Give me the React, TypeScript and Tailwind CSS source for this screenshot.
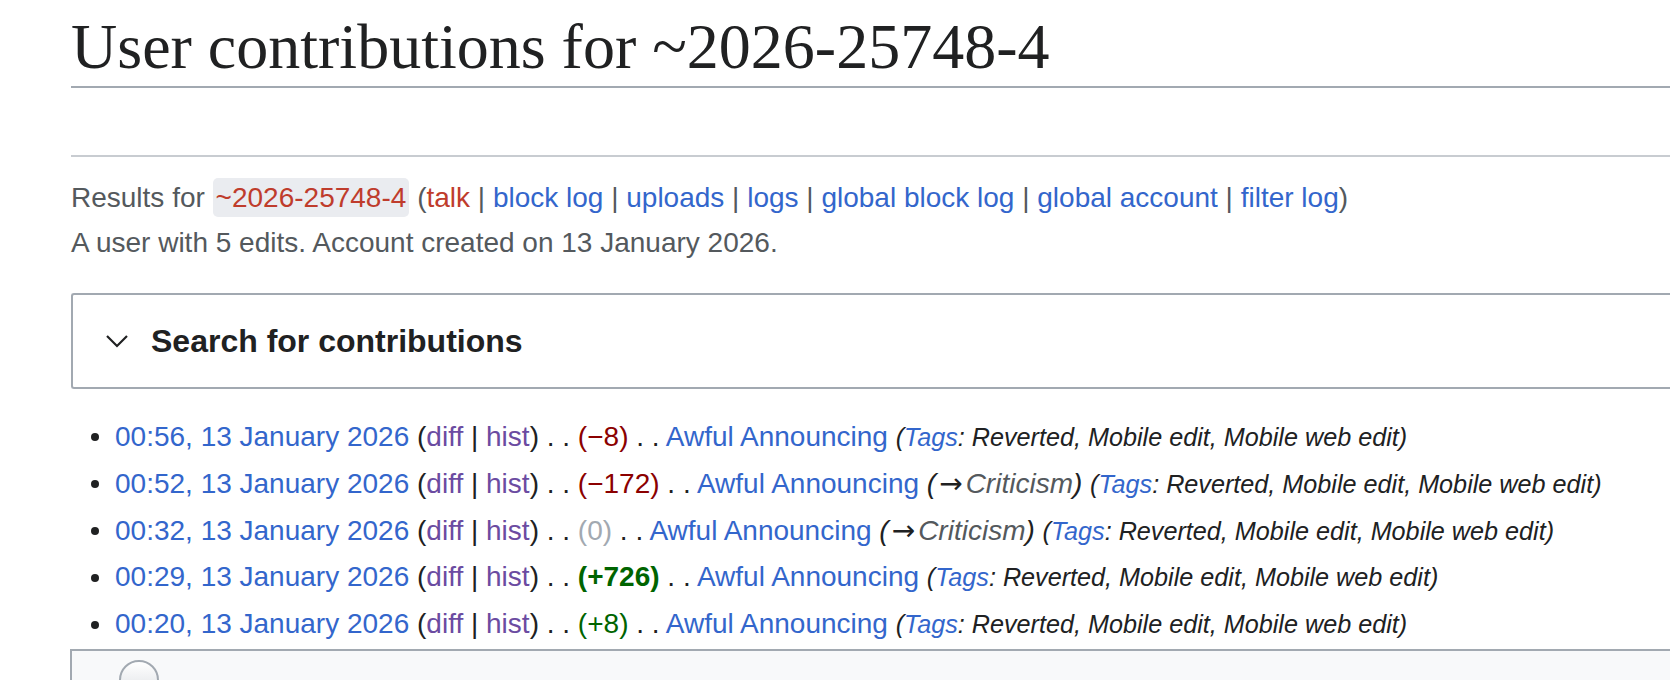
import React from 'react';

type Row = {
  time: string;
  diff: number;
  section: string | null;
};

const rows: Row[] = [
  { time: '00:56, 13 January 2026', diff: -8, section: null },
  { time: '00:52, 13 January 2026', diff: -172, section: 'Criticism' },
  { time: '00:32, 13 January 2026', diff: 0, section: 'Criticism' },
  { time: '00:29, 13 January 2026', diff: 726, section: null },
  { time: '00:20, 13 January 2026', diff: 8, section: null },
];

const toolLinks = ['block log', 'uploads', 'logs', 'global block log', 'global account', 'filter log'];

const Sep: React.FC = () => <span className="text-[#54595d]"> | </span>;

const DiffSize: React.FC<{ value: number }> = ({ value }) => {
  if (value === 0) return <span className="text-[#a2a9b1]">(0)</span>;
  if (value < 0) {
    return (
      <span className={value <= -500 ? 'text-[#8b0000] font-bold' : 'text-[#8b0000]'}>
        ({'\u2212'}{Math.abs(value)})
      </span>
    );
  }
  return (
    <span className={value >= 500 ? 'text-[#006400] font-bold' : 'text-[#006400]'}>
      (+{value})
    </span>
  );
};

const ContribRow: React.FC<{ row: Row }> = ({ row }) => (
  <li className="flex items-center mb-[2px] leading-[44.8px] whitespace-nowrap">
    <span className="w-[8px] h-[8px] rounded-full bg-[#202122] ml-[20px] mr-[16px] shrink-0" />
    <span>
      <a className="text-[#3366cc]">{row.time}</a>{' '}
      (<a className="text-[#6b4ba1]">diff</a> | <a className="text-[#6b4ba1]">hist</a>)
      {' . . '}
      <DiffSize value={row.diff} />
      {' . . '}
      <a className="text-[#3366cc]">Awful Announcing</a>{' '}
      {row.section && (
        <>
          <span className="italic">
            (<span className="not-italic font-['DejaVu_Sans',sans-serif] text-[28px] leading-none mx-[3px]">{'\u2192'}</span>
            <span className="text-[#54595d]">{row.section}</span>)
          </span>{' '}
        </>
      )}
      <span className="italic text-[25.2px]">
        (<a className="text-[#3366cc]">Tags</a>: Reverted, Mobile edit, Mobile web edit)
      </span>
    </span>
  </li>
);

export default function App() {
  return (
    <div className="min-h-[680px] bg-white pl-[71px] text-[#202122] font-['Liberation_Sans',Arial,sans-serif] text-[28px] overflow-hidden">
      {/* Page title */}
      <h1 className="pt-[8px] leading-[78px] text-[64px] font-['Liberation_Serif','Times_New_Roman',serif] font-normal text-[#202122] border-b-2 border-[#a2a9b1]">
        User contributions for ~2026-25748-4
      </h1>

      {/* Toolbar area */}
      <div className="h-[67px]" />
      <div className="border-t-2 border-[#c8ccd1]" />

      {/* Subtitle */}
      <div className="mt-[18px] text-[#54595d] leading-[45px] whitespace-nowrap">
        <div>
          Results for{' '}
          <span className="bg-[#eaecf0] rounded-[5px] px-[3px] py-[4px] text-[#bf3c2c]">~2026-25748-4</span>{' '}
          (<a className="text-[#bf3c2c]">talk</a>
          {toolLinks.map(link => (
            <React.Fragment key={link}>
              <Sep />
              <a className="text-[#3366cc]">{link}</a>
            </React.Fragment>
          ))}
          )
        </div>
        <div>A user with 5 edits. Account created on 13 January 2026.</div>
      </div>

      {/* Search form (collapsed) */}
      <div className="mt-[28px] h-[96px] border-2 border-r-0 border-[#a2a9b1] rounded-l-[3px] flex items-center pl-[32px] gap-[22px]">
        <svg width="24" height="14" viewBox="0 0 24 14" fill="none">
          <path d="M2 2 L12 12 L22 2" stroke="#202122" strokeWidth="2.2" />
        </svg>
        <span className="font-bold text-[32px]">Search for contributions</span>
      </div>

      {/* Contributions */}
      <ul className="mt-[26px]">
        {rows.map(row => (
          <ContribRow key={row.time} row={row} />
        ))}
      </ul>

      {/* Pager / next box */}
      <div className="mt-[1px] ml-[-1px] h-[60px] bg-[#f8f9fa] border-t-2 border-l-2 border-[#a2a9b1] pl-[47px] pt-[9px]">
        <div className="w-[40px] h-[40px] rounded-full border-2 border-[#a2a9b1] bg-gradient-to-b from-white to-[#dcdfe3]" />
      </div>
    </div>
  );
}
